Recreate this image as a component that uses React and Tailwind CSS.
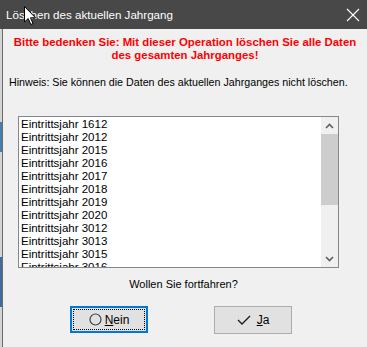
import React from "react";

const items = ["1612","2012","2015","2016","2017","2018","2019","2020","3012","3013","3015","3016"];

export default function App() {
  return (
    <div className="relative w-[367px] h-[347px] overflow-hidden flex flex-col bg-[#f0f0f0]" style={{fontFamily: '"Liberation Sans", Arial, sans-serif'}}>
      {/* title bar */}
      <div className="h-[29px] shrink-0 bg-[#484848] flex items-center justify-between pl-[6px] pr-[6px]">
        <span className="text-white text-[11.6px] whitespace-nowrap">Löschen des aktuellen Jahrgang</span>
        <svg width="14" height="14" viewBox="0 0 14 14" className="mr-[1px]">
          <path d="M1 1 L13 13 M13 1 L1 13" stroke="#ffffff" strokeWidth="1.1" fill="none" />
        </svg>
      </div>
      <div className="flex flex-1">
        <div className="w-[2px] flex flex-col bg-[#d4d4d4]">
          <div className="h-[93px]" />
          <div className="h-[30px] bg-[#4a7eaa]" />
          <div className="h-[105px]" />
          <div className="h-[50px] bg-[#3d6d98]" />
        </div>
        <div className="w-[1px] bg-[#6b6b6b]" />
        <div className="flex-1 flex flex-col">
          <div className="mt-[7px] text-center text-[#ff0000] font-bold text-[11.4px] leading-[13px] whitespace-nowrap">
            <div>Bitte bedenken Sie: Mit dieser Operation löschen Sie alle Daten</div>
            <div>des gesamten Jahrganges!</div>
          </div>
          <div className="mt-[13px] ml-[6px] text-[10.7px] leading-[14px] text-black whitespace-nowrap">
            Hinweis: Sie können die Daten des aktuellen Jahrganges nicht löschen.
          </div>
          <div className="mt-[27px] ml-[15px] w-[321px] h-[152px] shrink-0 border border-[#828790] bg-white flex overflow-hidden">
            <div className="flex-1 pl-[2px] pt-[1px] overflow-hidden">
              {items.map((y) => (
                <div key={y} className="h-[13px] leading-[13px] text-[11.5px] text-black whitespace-nowrap">Eintrittsjahr {y}</div>
              ))}
            </div>
            <div className="w-[17px] bg-[#f0f0f0] flex flex-col">
              <div className="h-[17px] flex items-center justify-center">
                <svg width="9" height="6" viewBox="0 0 9 6"><path d="M1 5 L4.5 1.5 L8 5" stroke="#606060" strokeWidth="1.6" fill="none" /></svg>
              </div>
              <div className="h-[71px] bg-[#cdcdcd]" />
              <div className="flex-1" />
              <div className="h-[17px] flex items-center justify-center">
                <svg width="9" height="6" viewBox="0 0 9 6"><path d="M1 1 L4.5 4.5 L8 1" stroke="#606060" strokeWidth="1.6" fill="none" /></svg>
              </div>
            </div>
          </div>
          <div className="mt-[9px] text-center text-[11px] leading-[14px] text-black pr-[3px] whitespace-nowrap">Wollen Sie fortfahren?</div>
          <div className="mt-[15px] flex">
            <div className="ml-[67px] w-[78px] h-[27px] border-2 border-[#0078d7] bg-[#e1e1e1] p-[1px]">
              <div className="w-full h-full border border-dotted border-black flex items-center justify-center gap-[3px]">
                <svg width="13" height="13" viewBox="0 0 13 13"><circle cx="6.5" cy="6.5" r="5.5" stroke="#404040" strokeWidth="1.2" fill="none" /></svg>
                <span className="text-[12px] text-black"><span className="underline">N</span>ein</span>
              </div>
            </div>
            <div className="ml-[66px] w-[78px] h-[28px] border border-[#adadad] bg-[#e1e1e1] flex items-center justify-center gap-[6px]">
              <svg width="14" height="10" viewBox="0 0 14 10"><path d="M1 5 L5 9 L13 1" stroke="#1a1a1a" strokeWidth="1.3" fill="none" /></svg>
              <span className="text-[12px] text-black"><span className="underline">J</span>a</span>
            </div>
          </div>
        </div>
      </div>
      {/* mouse cursor */}
      <svg className="absolute left-[24px] top-[6px]" width="13" height="20" viewBox="0 0 13 20">
        <path d="M0.5 0.5 L0.5 16 L4.2 12.5 L6.8 18.5 L9 17.5 L6.5 11.8 L11.5 11.8 Z" fill="#ffffff" stroke="#000000" strokeWidth="1" strokeLinejoin="miter" />
      </svg>
    </div>
  );
}
